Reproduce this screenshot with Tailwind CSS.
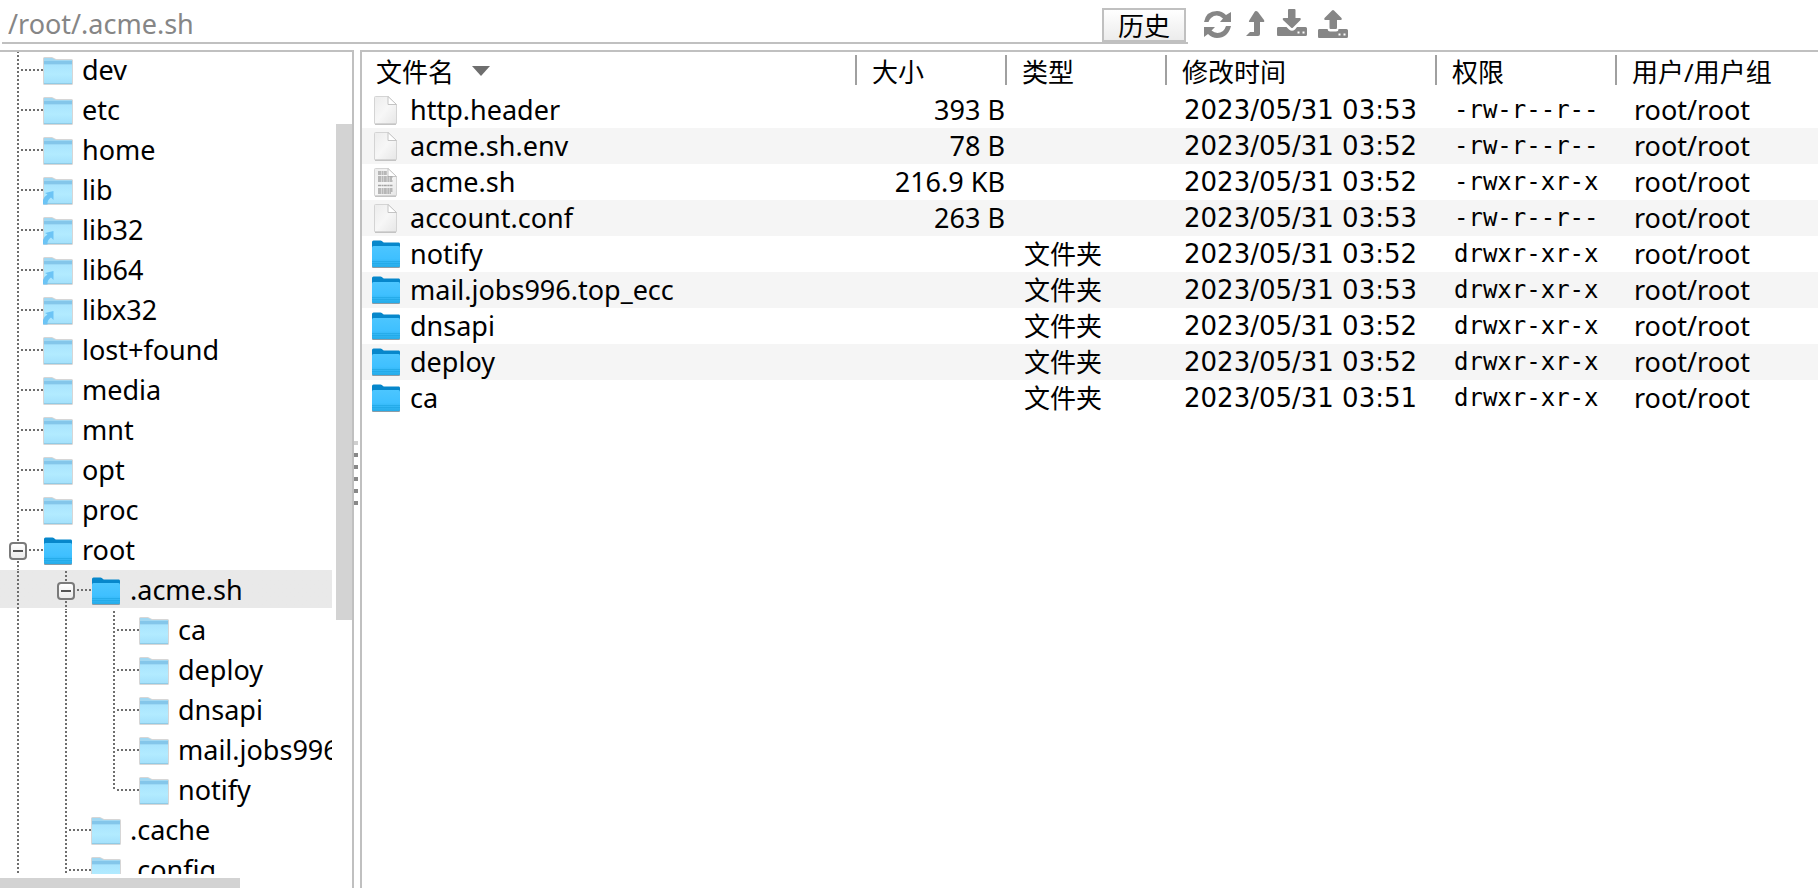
<!DOCTYPE html>
<html lang="zh-CN">
<head>
<meta charset="utf-8">
<title>文件管理</title>
<script src="https://cdn.jsdelivr.net/npm/@tailwindcss/browser@4"></script>
</head>
<body class="h-screen flex flex-col overflow-hidden bg-white text-black text-[27px] leading-9 font-['Noto_Sans','Noto_Sans_CJK_SC',sans-serif]">

<svg class="absolute size-0" aria-hidden="true">
  <defs>
    <linearGradient id="gl" x1="0" y1="0" x2="0" y2="1"><stop offset="0" stop-color="#a9e4fe"/><stop offset=".5" stop-color="#b2ebff"/><stop offset="1" stop-color="#a3e0fb"/></linearGradient>
    <linearGradient id="gd" x1="0" y1="0" x2="0" y2="1"><stop offset="0" stop-color="#4cc6ff"/><stop offset=".6" stop-color="#3fc0ff"/><stop offset="1" stop-color="#25ace9"/></linearGradient>
    <linearGradient id="gf" x1="0" y1="0" x2="1" y2="1"><stop offset="0" stop-color="#ececec"/><stop offset=".5" stop-color="#f7f7f7"/><stop offset="1" stop-color="#e6e6e6"/></linearGradient>
    <symbol id="light" viewBox="0 0 32 30">
      <path d="M1 2.500Q1 1 2.500 1H10L14 3H29.500Q31 3 31 4.500V27.500Q31 29 29.500 29H2.500Q1 29 1 27.500Z" fill="#d6d6d6"/>
      <path d="M2 2H10L14 4H30V12H2Z" fill="#a2d8f2"/>
      <path d="M2 5H30V8.500H2Z" fill="#84c6ea"/>
      <path d="M2 8.500H30V27Q30 28 29 28H3Q2 28 2 27Z" fill="url(#gl)"/>
      <path d="M2 27H30V28H2Z" fill="#8fcbe6"/>
    </symbol>
    <symbol id="dark" viewBox="0 0 32 30">
      <path d="M2 27H30V28Q30 29 29 29H3Q2 29 2 28Z" fill="#8c9ca6"/>
      <path d="M2 3Q2 1.500 3.500 1.500H10.500Q12 1.500 13 3Q13.500 3.500 15 3.500H29Q30 3.500 30 5V14H2Z" fill="#0787cb"/>
      <path d="M2 8.500Q2 7 3.500 7H28.500Q30 7 30 8.500V26.500Q30 28 28.500 28H3.500Q2 28 2 26.500Z" fill="url(#gd)"/>
      <path d="M2 22.500H30M2 24.500H30" stroke="#1ca2e0" stroke-width=".6"/>
    </symbol>
    <symbol id="link" viewBox="0 0 32 30">
      <use href="#light"/>
      <path d="M3 17L11.500 15V24L9 21.500Q5 24 5.500 28.500H1V24Q2 20.500 5.500 18.500Z" fill="#6cc4f5"/>
    </symbol>
    <symbol id="file" viewBox="0 0 26 30">
      <path d="M1.500 2.500Q1.500 1.500 2.500 1.500H15L23.500 9.500V28Q23.500 29 22.500 29H2.500Q1.500 29 1.500 28Z" fill="url(#gf)" stroke="#d4d4d4"/>
      <path d="M2 29.200H23" stroke="#b4b4b4"/>
      <path d="M15 1.500V9.500H23.500Z" fill="#fff" stroke="#c4c4c4"/>
    </symbol>
    <symbol id="script" viewBox="0 0 26 30">
      <use href="#file"/>
      <path d="M5 5H14M5 7H14M5 10H20M5 12H19M5 14H20M5 18.500H20M5 22H20M5 24H20M5 26H18" stroke="#a4a4a4" stroke-width="1.300" stroke-dasharray="3.100 .5 1.700 .4"/>
    </symbol>
  </defs>
</svg>

<header class="flex h-[50px] shrink-0 items-start">
  <div class="ml-[2px] flex h-11 w-[1186px] border-b-2 border-[#c0c0c0]">
    <input aria-label="路径" value="/root/.acme.sh" class="min-w-0 flex-1 self-end pl-[6px] h-9 text-[#868686] outline-none">
    <button class="mr-[2px] mt-2 h-[34px] w-[84px] border-2 border-[#c0c0c0] bg-linear-to-b from-white to-[#ececec] text-[26px] leading-8">历史</button>
  </div>
  <div class="ml-3 mt-2 flex gap-[10px] text-[#868686]">
    <button aria-label="刷新" class="size-8"><svg viewBox="0 0 32 32" class="size-8" fill="currentColor"><path d="M4 14Q6 3 17 3Q22 3 26 7L31 4V14H20L23 10.500Q17 5 11 10Q9 12 8.500 14Z"/><path d="M31 18Q28 30 17 30Q12 30 8 26L4 29V19H15L11.500 22.500Q17 27 23 23Q25 21 26 18Z"/></svg></button>
    <button aria-label="上级目录" class="h-8 w-6"><svg viewBox="0 0 24 32" class="h-8 w-6" fill="currentColor"><path d="M14 3Q15 3 16 4L22 12Q23 14 21 14H18V26Q18 28 16 28H4L8 24H12V14H8Q6 14 7.500 12L12.500 4Q13 3 14 3Z"/></svg></button>
    <button aria-label="下载" class="h-8 w-[31px]"><svg viewBox="0 0 32 32" class="size-8" fill="currentColor"><path d="M12 2Q12 1 13 1H18.500Q19.500 1 19.500 2V10H24Q25.500 10.500 24.500 12L17 19.500Q16 20.500 15 19.500L7 12Q6 10.500 7.500 10H12Z"/><path fill-rule="evenodd" d="M2 19H10.500L13 21.500Q16 24 19 21.500L21 19H29.500Q31 19 31 20.500V26.500Q31 28 29.500 28H2Q1 28 1 26.500V20.500Q1 19 2 19ZM21.500 23.500V25.500H23.500V23.500ZM26.500 23.500V25.500H28.500V23.500Z"/></svg></button>
    <button aria-label="上传" class="size-8"><svg viewBox="0 0 32 32" class="size-8" fill="currentColor"><path d="M15 2.500Q16 1.500 17 2.500L24.500 10Q25.500 11.500 24 12H20V19.500Q20 21 19 21H13.500Q12.500 21 12.500 19.500V12H8Q6.500 11.500 7.500 10Z"/><path fill-rule="evenodd" d="M2 21H10.500Q11 23.500 13 23.500H19Q21.500 23.500 21.500 21H29.500Q31 21 31 22.500V28.500Q31 30 29.500 30H2Q1 30 1 28.500V22.500Q1 21 2 21ZM21.500 25.500V27.500H23.500V25.500ZM26.500 25.500V27.500H28.500V25.500Z"/></svg></button>
  </div>
</header>

<main class="flex min-h-0 flex-1">
  <nav aria-label="目录" class="flex w-[354px] shrink-0 border-t-2 border-r-2 border-[#c0c0c0]">
    <div class="flex min-w-0 flex-1 flex-col">
      <ul id="tree" class="mr-1 min-h-0 flex-1 overflow-hidden whitespace-nowrap"></ul>
      <div class="mt-1 h-[10px] w-60 bg-[#d3d3d3]"></div>
    </div>
    <div class="w-4"><div class="mt-18 h-[496px] bg-[#d3d3d3]"></div></div>
  </nav>
  <div class="flex w-[6px] shrink-0 flex-col items-start justify-center gap-2 pt-2" id="split"></div>
  <section class="min-w-0 flex-1 border-t-2 border-l-2 border-[#c0c0c0]">
    <table class="w-full table-fixed">
      <colgroup><col><col class="w-[150px]"><col class="w-40"><col class="w-[270px]"><col class="w-[180px]"><col class="w-[201px]"></colgroup>
      <thead><tr id="head" class="h-10 text-left align-top text-[26px]"></tr></thead>
      <tbody id="rows"></tbody>
    </table>
  </section>
</main>

<script>
const V = 'w-[2px] bg-[repeating-linear-gradient(to_bottom,transparent_0_1px,#6e6e6e_1px_3px,transparent_3px_4px)]';
const H = 'h-[2px] self-center bg-[repeating-linear-gradient(to_right,#6e6e6e_0_2px,transparent_2px_4px)]';
const tree = [
  [0,'dev'],[0,'etc'],[0,'home'],[0,'lib','link'],[0,'lib32','link'],[0,'lib64','link'],[0,'libx32','link'],
  [0,'lost+found'],[0,'media'],[0,'mnt'],[0,'opt'],[0,'proc'],[0,'root','dark'],[1,'.acme.sh','dark'],
  [2,'ca'],[2,'deploy'],[2,'dnsapi'],[2,'mail.jobs996.top_ecc'],[2,'notify'],[1,'.cache'],[1,'.config']
];
document.getElementById('tree').innerHTML = tree.map(([d, name, icon = 'light'], i) => {
  const guides = `<span class="flex h-10 w-12 shrink-0 pl-[17px]"><i class="${V}"></i></span>`.repeat(d);
  const node = icon === 'dark'
    ? `<span class="flex h-10 w-[43px] shrink-0 pl-[9px]"><span class="flex w-[18px] flex-col items-center"><i class="${V} h-3"></i><button aria-label="折叠 ${name}" class="flex size-[18px] items-center justify-center rounded-[4px] border-2 border-[#7a7a7a] bg-linear-to-b from-white to-[#ececec]"><i class="h-[2px] w-[10px] bg-[#555]"></i></button><i class="${V} flex-1"></i></span><i class="${H} ml-[2px] flex-1"></i></span>`
    : `<span class="flex h-10 w-[43px] shrink-0 pl-[17px]"><i class="${V} ${name === 'notify' ? 'h-5' : 'h-10'}"></i><i class="${H} ml-[2px] flex-1"></i></span>`;
  return `<li class="flex h-10 items-start ${i ? '' : '-mt-[2px]'} ${name === '.acme.sh' ? 'bg-linear-to-b from-[#e9e9e9] from-95% to-white to-95%' : ''}">${guides}${node}<svg class="mt-[6px] h-[30px] w-8 shrink-0 -ml-px"><use href="#${icon}"/></svg><a href="#" class="ml-2 leading-10">${name}</a></li>`;
}).join('');

document.getElementById('split').innerHTML = '<i class="size-1 bg-[#cfcfcf] last:bg-[#cfcfcf] nth-[n+2]:bg-[#888]"></i>'.repeat(6);

document.getElementById('head').innerHTML = [['文件名','pl-[14px]'],['大小','pl-[15px]'],['类型','pl-[15px]'],['修改时间','pl-[15px]'],['权限','pl-[15px]'],['用户/用户组','pl-[15px]']].map(([t, p], i) =>
  `<th scope="col" class="p-0 pt-[3px] font-normal"><div class="flex h-[30px] items-center gap-[18px] whitespace-nowrap ${p} ${i < 5 ? 'border-r-2 border-[#a0a0a0]' : ''}"><span class="pt-1 leading-9">${t}</span>${i ? '' : '<svg class="mt-[2px] h-[10px] w-[18px]" viewBox="0 0 18 10" fill="#6e6e6e"><path d="M0 0H18L9 10Z"/></svg>'}</div></th>`).join('');

const files = [
  ['file','http.header','393 B','53','-rw-r--r--'],['file','acme.sh.env','78 B','52','-rw-r--r--'],
  ['script','acme.sh','216.9 KB','52','-rwxr-xr-x'],['file','account.conf','263 B','53','-rw-r--r--'],
  ['dark','notify','','52','drwxr-xr-x'],['dark','mail.jobs996.top_ecc','','53','drwxr-xr-x'],
  ['dark','dnsapi','','52','drwxr-xr-x'],['dark','deploy','','52','drwxr-xr-x'],['dark','ca','','51','drwxr-xr-x']
];
document.getElementById('rows').innerHTML = files.map(([icon, name, size, min, perm]) =>
  `<tr class="h-9 whitespace-nowrap even:bg-[#f5f5f5]">
    <td class="p-0"><div class="flex h-9 items-center"><span class="ml-[6px] flex w-9 justify-center"><svg class="h-[30px] ${icon === 'dark' ? 'w-8' : 'w-[26px]'}"><use href="#${icon}"/></svg></span><span class="ml-[6px]">${name}</span></div></td>
    <td class="p-0 pr-[2px] text-right">${size}</td>
    <td class="p-0 pl-[17px] text-[26px]">${size ? '' : '文件夹'}</td>
    <td class="p-0 pl-[17px] pt-px font-['DejaVu_Sans',sans-serif] text-[26px] leading-[35px]">2023/05/31 03:${min}</td>
    <td class="p-0 pl-[17px] pt-px font-['DejaVu_Sans_Mono',monospace] text-2xl leading-[35px]">${perm}</td>
    <td class="p-0 pl-[17px]">root/root</td></tr>`).join('');
</script>
</body>
</html>
